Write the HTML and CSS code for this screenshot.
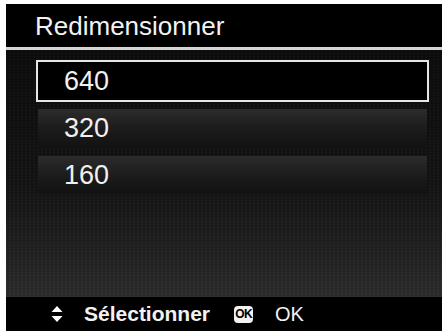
FILE: index.html
```html
<!DOCTYPE html>
<html>
<head>
<meta charset="utf-8">
<link rel="stylesheet" href="styles.css">
</head>
<body>
<div class="screen">
  <div class="header"><span class="title">Redimensionner</span></div>
  <div class="content">
    <div class="item selected">640</div>
    <div class="item">320</div>
    <div class="item">160</div>
  </div>
  <div class="footer">
    <svg class="updown" width="12" height="16" viewBox="0 0 12 16"><polygon points="6,0 11.5,6 0.5,6" fill="#fff"/><polygon points="0.5,10 11.5,10 6,16" fill="#fff"/></svg>
    <span class="hint bold">Sélectionner</span>
    <span class="okbadge">OK</span>
    <span class="hint">OK</span>
  </div>
</div>
</body>
</html>
```
FILE: styles.css
```css
html, body { margin: 0; padding: 0; background: #fff; }
body { width: 442px; height: 331px; overflow: hidden; }
.screen {
  margin: 4px 0 0 6px;
  width: 436px;
  height: 327px;
  background: #000;
  display: flex;
  flex-direction: column;
  font-family: "Liberation Sans", Arial, sans-serif;
  color: #fff;
}
.header {
  height: 43px;
  display: flex;
  align-items: center;
  padding-left: 29px;
  border-bottom: 3px solid #d4d4d4;
  box-sizing: content-box;
}
.title { font-size: 26px; line-height: 26px; color: #f2f2f2; }
.content {
  flex: 1;
  display: flex;
  flex-direction: column;
  gap: 5px;
  padding: 10px 13px 0 30px;
  background:
    repeating-linear-gradient(90deg, rgba(255,255,255,0.02) 0 1px, rgba(0,0,0,0.03) 1px 3px, rgba(255,255,255,0.015) 3px 4px),
    repeating-linear-gradient(0deg, rgba(255,255,255,0.015) 0 1px, rgba(0,0,0,0.02) 1px 3px),
    linear-gradient(180deg, #0a0a0a 0%, #121212 55%, #1f1f1f 80%, #2b2b2b 100%);
}
.item {
  height: 38px;
  margin: 2px 2px;
  display: flex;
  align-items: center;
  padding-left: 26px;
  font-size: 27px;
  color: #f0f0f0;
  background: linear-gradient(180deg, #2c2c2c 0%, #1c1c1c 50%, #121212 100%);
}
.item.selected {
  margin: 0;
  height: 38px;
  border: 2px solid #e6e6e6;
  background: #000;
  padding-left: 26px;
}
.footer {
  height: 34px;
  display: flex;
  align-items: center;
  padding-left: 45px;
  background: #000;
}
.updown { margin-right: 21px; }
.hint { font-size: 20px; line-height: 20px; color: #f2f2f2; }
.hint.bold { font-weight: bold; font-size: 21px; margin-right: 24px; }
.okbadge {
  display: inline-flex;
  align-items: center;
  justify-content: center;
  width: 19px;
  height: 17px;
  border-radius: 4px;
  background: #f2f2f2;
  color: #000;
  font-weight: bold;
  font-size: 12px;
  letter-spacing: -0.8px;
  margin-right: 22px;
}
```
